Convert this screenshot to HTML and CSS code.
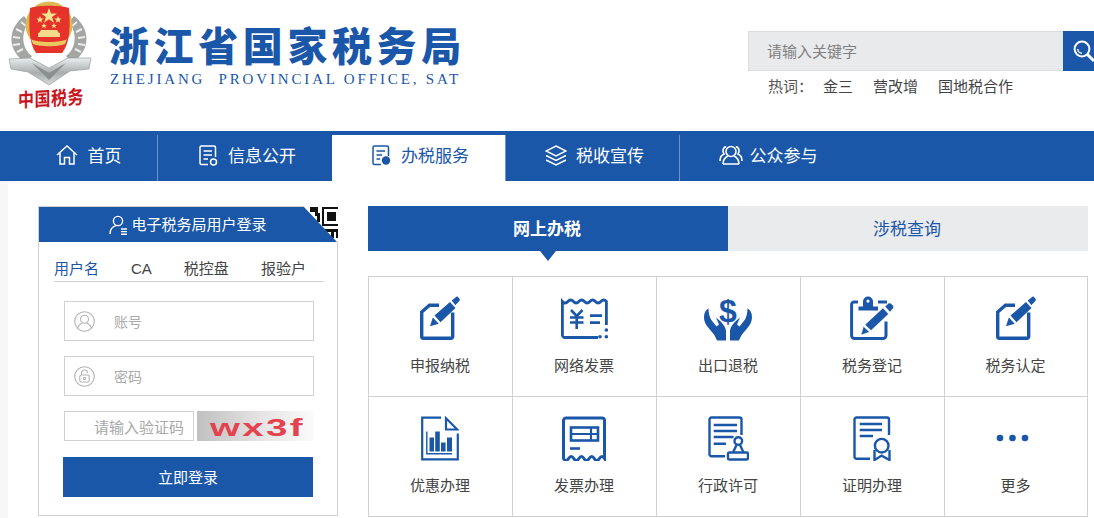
FILE: index.html
```html
<!DOCTYPE html>
<html lang="zh-CN">
<head>
<meta charset="utf-8">
<title>浙江省国家税务局</title>
<link rel="stylesheet" href="styles.css">
</head>
<body>
<div class="page">
  <header class="header">
    <div class="emblem">
      <svg class="emblem-mark" viewBox="0 0 100 86" width="100" height="86">
        <defs>
          <linearGradient id="silver" x1="0" y1="0" x2="0" y2="1">
            <stop offset="0" stop-color="#eceeee"/>
            <stop offset="0.55" stop-color="#a9adad"/>
            <stop offset="1" stop-color="#d9dbdb"/>
          </linearGradient>
        </defs>
        <path d="M24 16 C8 28 6 50 26 63 L32 56 C21 48 21 32 29 22Z" fill="#a3a6a3"/>
        <path d="M74 16 C90 28 92 50 72 63 L66 56 C77 48 77 32 69 22Z" fill="#a3a6a3"/>
        <path d="M21 22 l5 4 M16 29 l6 3 M13 37 l7 1 M13 45 l7 -1 M17 52 l6 -3 M77 22 l-5 4 M82 29 l-6 3 M85 37 l-7 1 M85 45 l-7 -1 M81 52 l-6 -3" stroke="#ececec" stroke-width="2"/>
        <path d="M9 59 L30 58 L49 68 L68 58 L91 58 L89 69 L70 71 L49 85 L28 72 L11 69Z" fill="url(#silver)" stroke="#9a9d9d" stroke-width="0.7"/>
        <path d="M32 63 L49 73 L66 63 L49 80Z" fill="#8b8f8f"/>
        <circle cx="49" cy="25" r="23.5" fill="#dcb84e"/>
        <path d="M30 8 C38 5 60 5 69 8 C70 22 71 42 62 53 L36 53 C28 42 29 22 30 8Z" fill="#e5322a"/>
        <path d="M49 8 l2 5.6 h5.8 l-4.7 3.5 1.8 5.6 -4.9 -3.4 -4.9 3.4 1.8 -5.6 -4.7 -3.5 h5.8Z" fill="#f8e38a"/>
        <path d="M40 16 l1 2.6 h2.6 l-2.1 1.6 .8 2.6 -2.3 -1.6 -2.3 1.6 .8 -2.6 -2.1 -1.6 h2.6Z M58 16 l1 2.6 h2.6 l-2.1 1.6 .8 2.6 -2.3 -1.6 -2.3 1.6 .8 -2.6 -2.1 -1.6 h2.6Z M44 23 l.8 2 h2 l-1.6 1.2 .6 2 -1.8 -1.2 -1.8 1.2 .6 -2 -1.6 -1.2 h2Z M54 23 l.8 2 h2 l-1.6 1.2 .6 2 -1.8 -1.2 -1.8 1.2 .6 -2 -1.6 -1.2 h2Z" fill="#f8e38a"/>
        <path d="M41 30 h16 l2 3 h-20Z M38 33 h22 v4 h-22Z" fill="#f2d98b"/>
        <path d="M31 39 C36 43 62 43 67 39 L65 44 C58 47 40 47 33 44Z" fill="#e8c961"/>
      </svg>
      <span class="emblem-text">中国税务</span>
    </div>
    <div class="brand">
      <div class="brand-name">浙江省国家税务局</div>
      <div class="brand-en">ZHEJIANG  PROVINCIAL OFFICE, SAT</div>
    </div>
    <div class="search">
      <div class="search-bar">
        <span class="search-field">请输入关键字</span>
        <span class="search-btn">
          <svg viewBox="0 0 24 24" width="24" height="24" fill="none" stroke="#fff">
            <circle cx="10" cy="10" r="7.4" stroke-width="2"/>
            <path d="M5.8 10 a4.2 4.2 0 0 0 4.2 4.2" stroke-width="1.4"/>
            <path d="M15.6 15.6 L22 22" stroke-width="3"/>
          </svg>
        </span>
      </div>
      <div class="hot">
        <span class="hot-label">热词：</span>
        <a class="hot-item">金三</a>
        <a class="hot-item">营改增</a>
        <a class="hot-item">国地税合作</a>
      </div>
    </div>
  </header>

  <nav class="nav">
    <a class="nav-item nav-home">
      <svg class="nav-icon" viewBox="0 0 22 20" width="22" height="20" fill="none" stroke="currentColor" stroke-width="1.5">
        <path d="M1 10 L11 1 L21 10"/>
        <path d="M4 8 V19 H8.5 V12.5 H13.5 V19 H18 V8"/>
      </svg>
      <span>首页</span>
    </a>
    <a class="nav-item nav-info">
      <svg class="nav-icon" viewBox="0 0 19 21" width="19" height="21" fill="none" stroke="currentColor" stroke-width="1.5">
        <path d="M9 19.5 H2.5 a1.5 1.5 0 0 1 -1.5 -1.5 V2.5 A1.5 1.5 0 0 1 2.5 1 H15 a1.5 1.5 0 0 1 1.5 1.5 V12"/>
        <path d="M4.5 6 H13 M4.5 10 H13 M4.5 14 H9"/>
        <circle cx="14.5" cy="17" r="3"/>
      </svg>
      <span>信息公开</span>
    </a>
    <a class="nav-item nav-active">
      <svg class="nav-icon" viewBox="0 0 19 21" width="19" height="21" fill="none" stroke="currentColor" stroke-width="1.5">
        <path d="M9 19.5 H2.5 a1.5 1.5 0 0 1 -1.5 -1.5 V2.5 A1.5 1.5 0 0 1 2.5 1 H15 a1.5 1.5 0 0 1 1.5 1.5 V11"/>
        <path d="M4.5 6 H13 M4.5 10 H10 M4.5 14 H8"/>
        <circle cx="14" cy="15.5" r="4.2" fill="currentColor" stroke="none"/>
      </svg>
      <span>办税服务</span>
    </a>
    <a class="nav-item nav-news">
      <svg class="nav-icon" viewBox="0 0 22 21" width="22" height="21" fill="none" stroke="currentColor" stroke-width="1.5">
        <path d="M11 1 L21 6 L11 11 L1 6Z"/>
        <path d="M1 10.5 L11 15.5 L21 10.5"/>
        <path d="M1 15 L11 20 L21 15"/>
      </svg>
      <span>税收宣传</span>
    </a>
    <a class="nav-item nav-last">
      <svg class="nav-icon" viewBox="0 0 24 20" width="24" height="20" fill="none" stroke="currentColor" stroke-width="1.6">
        <circle cx="12" cy="6.5" r="5"/>
        <path d="M4 19 C4 14 7 12 9 11 M20 19 C20 14 17 12 15 11 M4 19 H20"/>
        <path d="M7.2 1.6 C4 2 3 6 5 9 C2.5 10 1 13 1 16 M16.8 1.6 C20 2 21 6 19 9 C21.5 10 23 13 23 16"/>
      </svg>
      <span>公众参与</span>
    </a>
  </nav>

  <main class="main">
    <section class="login">
      <svg class="login-qr" viewBox="0 0 36 36" width="36" height="36">
        <path d="M2 0 H36 V36Z" fill="#fff"/>
        <path d="M8 1 h5 v5 h-5Z M13 1 h3 v9 h-3Z M15 7 h3 v9 h-3Z M20 1 h16 v2 h-16Z M20 1 h2 v19 h-2Z M20 18 h16 v2 h-16Z M25 6 h9 v9 h-9Z M23 23 h13 v3 h-13Z M29 26 h3 v6 h-3Z M34 26 h2 v6 h-2Z" fill="#111"/>
      </svg>
      <h2 class="login-head">
        <svg viewBox="0 0 19 20" width="19" height="20" fill="none" stroke="#fff" stroke-width="1.4">
          <circle cx="9" cy="6" r="4.6"/>
          <path d="M1 19 C1 14 4 11.5 7 10.6 M12 14 H18 M12 16.6 H18 M12 19.2 H18"/>
        </svg>
        <span class="login-title">电子税务局用户登录</span>
      </h2>
      <div class="login-tabs">
        <a class="login-tab login-tab-on">用户名</a>
        <a class="login-tab">CA</a>
        <a class="login-tab">税控盘</a>
        <a class="login-tab">报验户</a>
      </div>
      <div class="login-form">
        <div class="field">
          <svg viewBox="0 0 21 21" width="21" height="21" fill="none" stroke="#b4b4b4" stroke-width="1.1">
            <circle cx="10.5" cy="10.5" r="9.8"/>
            <circle cx="10.5" cy="8.2" r="4"/>
            <path d="M3.6 17 C4.5 14 6 13 8 12 M17.4 17 C16.5 14 15 13 13 12"/>
          </svg>
          <span class="field-hint">账号</span>
        </div>
        <div class="field">
          <svg viewBox="0 0 21 21" width="21" height="21" fill="none" stroke="#b4b4b4" stroke-width="1.1">
            <circle cx="10.5" cy="10.5" r="9.8"/>
            <rect x="5.8" y="9" width="9.4" height="7" rx="1.5"/>
            <path d="M7.5 9 V7 a3 3 0 0 1 6 0"/>
            <circle cx="10.5" cy="12.5" r="1.1"/>
          </svg>
          <span class="field-hint">密码</span>
        </div>
        <div class="captcha-row">
          <div class="captcha-field">请输入验证码</div>
          <div class="captcha-code"><span class="captcha-chars">wx3f</span></div>
        </div>
        <button class="login-btn" type="button">立即登录</button>
      </div>
    </section>

    <section class="service">
      <div class="service-tabs">
        <a class="service-tab service-tab-on">网上办税</a>
        <a class="service-tab">涉税查询</a>
      </div>
      <div class="service-grid">
        <a class="tile">
          <svg class="tile-icon" viewBox="0 0 40 44" width="40" height="44">
            <g id="edit-doc">
              <path d="M19 8.7 H9.5 L1.7 15.5 V40 a1.7 1.7 0 0 0 1.7 1.7 H31 a1.7 1.7 0 0 0 1.7 -1.7 V16" fill="none" stroke="#1a57a8" stroke-width="3.4"/>
              <path d="M10 29.8 L12.8 21 L18.8 27.2Z M14.5 19 L30 5.5 L35.5 11.5 L20.5 25.8Z M31.8 4 L36.3 0.3 Q37.5 -0.3 38.5 1 L39.6 2.6 Q40.2 3.8 39 4.8 L35.4 8.8Z" fill="#1a57a8"/>
            </g>
          </svg>
          <span class="tile-name">申报纳税</span>
        </a>
        <a class="tile">
          <svg class="tile-icon" viewBox="0 0 47 41" width="47" height="41" fill="none" stroke="#1a57a8" stroke-width="2.8">
            <path d="M37 39.5 H4 a2.6 2.6 0 0 1 -2.6 -2.6 V3.5 q2.75 3 5.5 0 t5.5 0 t5.5 0 t5.5 0 t5.5 0 t5.5 0 t5.5 0 t5.5 0 V27"/>
            <path d="M10 12 L15.7 18 L21.5 12 M9 19.5 H22.5 M9 24.5 H22.5 M15.7 18 V31" stroke-width="2.6"/>
            <path d="M29 17.7 H41 M29 24.7 H39"/>
            <circle cx="45.3" cy="32" r="1.8" fill="#1a57a8" stroke="none"/>
            <circle cx="45.3" cy="38.7" r="1.8" fill="#1a57a8" stroke="none"/>
            <circle cx="39" cy="38.7" r="1.8" fill="#1a57a8" stroke="none"/>
          </svg>
          <span class="tile-name">网络发票</span>
        </a>
        <a class="tile">
          <svg class="tile-icon tile-icon-open" viewBox="0 0 48 44" width="48" height="44" fill="#1a57a8">
            <text x="24" y="25" text-anchor="middle" class="dollar">$</text>
            <path d="M4.5 12 C-1 15 -1 23 2 28 C5 33 10 36 13 44 H22 V35 C22 30 18 26 12 21 L15 28 L12.5 30 L7 23 C5 19 4.5 15 4.5 12Z"/>
            <path d="M43.5 12 C49 15 49 23 46 28 C43 33 38 36 35 44 H26 V35 C26 30 30 26 36 21 L33 28 L35.5 30 L41 23 C43 19 43.5 15 43.5 12Z"/>
          </svg>
          <span class="tile-name">出口退税</span>
        </a>
        <a class="tile">
          <svg class="tile-icon" viewBox="0 0 44 44" width="44" height="44">
            <path d="M8 5.6 H4 a2.4 2.4 0 0 0 -2.4 2.4 V39 a3 3 0 0 0 3 3 H33 a3 3 0 0 0 3 -3 V25 M28 5.6 H37" fill="none" stroke="#1a57a8" stroke-width="3"/>
            <path d="M8.5 14 V10 H13 V5 A5 5 0 0 1 23 5 V10 H28 V14Z" fill="#1a57a8"/>
            <circle cx="18" cy="4.6" r="1.6" fill="#fff"/>
            <path d="M11 38.5 L13.5 30 L19.5 35.5Z M15 28.2 L33 11.5 L38.5 17.5 L21 34Z M35 10 L38.5 6.8 Q40 6 41 7 L43 9 Q44.2 10.5 43 12 L40 15.5Z" fill="#1a57a8" stroke="#fff" stroke-width="0.4"/>
          </svg>
          <span class="tile-name">税务登记</span>
        </a>
        <a class="tile">
          <svg class="tile-icon" viewBox="0 0 40 44" width="40" height="44"><use href="#edit-doc"/></svg>
          <span class="tile-name">税务认定</span>
        </a>
        <a class="tile">
          <svg class="tile-icon" viewBox="0 0 38 44" width="38" height="44">
            <path d="M20 1.2 H1.2 V42.8 H36.8 V17" fill="none" stroke="#1a57a8" stroke-width="2.2"/>
            <path d="M25 1.8 L36.3 13 H25Z" fill="none" stroke="#1a57a8" stroke-width="2.2"/>
            <path d="M5.8 15 V37.3 H31" fill="none" stroke="#1a57a8" stroke-width="1.4"/>
            <path d="M8.5 21 H13 V35 H8.5Z M14.2 15 H18.8 V35 H14.2Z M20 26 H24.6 V35 H20Z M26 21 H31 V35 H26Z" fill="#1a57a8"/>
          </svg>
          <span class="tile-name">优惠办理</span>
        </a>
        <a class="tile">
          <svg class="tile-icon" viewBox="0 0 44 44" width="44" height="44" fill="none" stroke="#1a57a8">
            <path d="M1.5 42 V4 a2.5 2.5 0 0 1 2.5 -2.5 H40 a2.5 2.5 0 0 1 2.5 2.5 V42 q-2.56 -4 -5.125 0 t-5.125 0 t-5.125 0 t-5.125 0 t-5.125 0 t-5.125 0 t-5.125 0 t-5.125 0Z" stroke-width="3"/>
            <rect x="9" y="11" width="27" height="13" stroke-width="2.6"/>
            <path d="M9 17.5 H36 M29 11 V24" stroke-width="2.2"/>
            <path d="M8 32 H18" stroke-width="2.6"/>
          </svg>
          <span class="tile-name">发票办理</span>
        </a>
        <a class="tile">
          <svg class="tile-icon" viewBox="0 0 41 45" width="41" height="45" fill="none" stroke="#1a57a8" stroke-width="2.4">
            <path d="M17 40.3 H3.5 a2 2 0 0 1 -2 -2 V3.5 a2 2 0 0 1 2 -2 H31.5 a2 2 0 0 1 2 2 V19"/>
            <path d="M5.7 9 H29 M5.7 15 H29 M5.7 21 H25.5 M5.7 27.7 H18"/>
            <circle cx="30.3" cy="25" r="3.8"/>
            <path d="M28.5 29 L25 36.5 M32 29 L35.5 36.5"/>
            <rect x="20" y="36.5" width="20" height="7" rx="1.5"/>
          </svg>
          <span class="tile-name">行政许可</span>
        </a>
        <a class="tile">
          <svg class="tile-icon" viewBox="0 0 38 45" width="38" height="45" fill="none" stroke="#1a57a8" stroke-width="2.4">
            <path d="M17 42.7 H3.5 a2 2 0 0 1 -2 -2 V3.5 a2 2 0 0 1 2 -2 H34 a2 2 0 0 1 2 2 V19"/>
            <path d="M6.7 8 H29 M6.7 14 H29 M6.7 20 H20"/>
            <circle cx="28.7" cy="29.7" r="6.8"/>
            <path d="M21.5 34 V44 L28.7 39.6 L36.5 44 V34"/>
          </svg>
          <span class="tile-name">证明办理</span>
        </a>
        <a class="tile">
          <svg class="tile-icon" viewBox="0 0 45 45" width="45" height="45" fill="#1a57a8">
            <circle cx="7" cy="22" r="3.3"/>
            <circle cx="19.5" cy="22" r="3.3"/>
            <circle cx="32" cy="22" r="3.3"/>
          </svg>
          <span class="tile-name">更多</span>
        </a>
      </div>
    </section>
  </main>
</div>
</body>
</html>
```

FILE: styles.css
```css
html {
  overflow: hidden;
}

body {
  margin: 0;
  background: #fff;
  color: #444;
  font-family: "Noto Sans CJK SC", "Liberation Sans", sans-serif;
  font-size: 15px;
}

a {
  color: inherit;
  text-decoration: none;
}

.page {
  width: 1105px;
  height: 518px;
  overflow: hidden;
}

/* Top band: emblem, site name, search */
.header {
  display: flex;
  height: 131px;
}

.emblem {
  display: flex;
  flex-direction: column;
  align-items: center;
  width: 100px;
  height: 115px;
  flex: none;
}

.emblem-mark {
  display: block;
}

.emblem-text {
  width: 66px;
  margin-left: 2px;
  color: #c8141c;
  font-size: 16px;
  font-weight: 700;
  line-height: 22px;
  letter-spacing: 0.5px;
  white-space: nowrap;
  transform: skewY(-3deg) scaleY(1.2);
}

.brand {
  flex: none;
  margin-left: 9px;
  padding-top: 21px;
  color: #1a57a8;
}

.brand-name {
  font-size: 40px;
  font-weight: 900;
  line-height: 46px;
  letter-spacing: 4.6px;
  white-space: nowrap;
}

.brand-en {
  margin-top: 3px;
  margin-left: 1px;
  font-family: "Liberation Serif", serif;
  font-size: 15px;
  line-height: 18px;
  letter-spacing: 2.85px;
  white-space: pre;
}

.search {
  margin-left: auto;
  padding-top: 31px;
  width: 357px;
  flex: none;
}

.search-bar {
  display: flex;
  height: 40px;
}

.search-field {
  flex: 1;
  padding-left: 18px;
  border: 1px solid #dcdddf;
  border-right: 0;
  background: #e9eaec;
  color: #808080;
  font-size: 15px;
  line-height: 38px;
}

.search-btn {
  display: flex;
  align-items: center;
  justify-content: center;
  width: 42px;
  flex: none;
  background: #1a57a8;
}

.hot {
  display: flex;
  gap: 20px;
  padding: 4px 0 0 20px;
  color: #444;
  line-height: 21px;
}

.hot-label {
  margin-right: -10px;
  color: #555;
}

/* Main navigation */
.nav {
  display: flex;
  height: 50px;
  padding-top: 4px;
  box-sizing: border-box;
  background: #1a57a8;
  color: #fff;
}

.nav-item {
  display: flex;
  align-items: center;
  justify-content: center;
  gap: 10px;
  width: 174px;
  padding: 0 0 6px 4px;
  box-sizing: border-box;
  border-right: 1px solid #6d95c9;
  font-size: 17px;
  line-height: 24px;
}

.nav-icon {
  flex: none;
}

.nav-home {
  width: 158px;
  padding-left: 20px;
}

.nav-info {
  padding-left: 6px;
  border-right-color: transparent;
}

.nav-active {
  background: #fff;
  color: #1a57a8;
}

.nav-news {
  gap: 9px;
}

.nav-last {
  border-right: 0;
  padding-left: 2px;
  gap: 7px;
}

/* Content columns */
.main {
  display: flex;
  gap: 30px;
  height: 337px;
  padding: 25px 0 0 30px;
  box-sizing: border-box;
  border-left: 8px solid #f7f7f7;
}

.login {
  position: relative;
  width: 300px;
  height: 310px;
  box-sizing: border-box;
  border: 1px solid #d2d2d2;
  background: #fff;
}

.login-qr {
  position: absolute;
  top: -1px;
  right: -1px;
}

.login-head {
  position: relative;
  display: flex;
  align-items: center;
  justify-content: center;
  gap: 3px;
  height: 35px;
  margin: 0;
  background: #1a57a8;
  color: #fff;
  font-size: 15px;
  font-weight: 400;
  line-height: 21px;
  clip-path: polygon(0 0, 265px 0, 100% 100%, 0 100%);
}

.login-title {
  margin-top: -2px;
}

.login-tabs {
  display: flex;
  gap: 32px;
  height: 40px;
  margin: 0 13px 0 15px;
  box-sizing: border-box;
  padding-top: 16px;
  border-bottom: 1px solid #d2d2d2;
  line-height: 21px;
}

.login-tab {
  font-family: "Liberation Sans", "Noto Sans CJK SC", sans-serif;
}

.login-tab-on {
  color: #1a57a8;
}

.login-form {
  padding: 19px 23px 0 24px;
}

.field {
  display: flex;
  align-items: center;
  gap: 19px;
  height: 40px;
  margin: 0 0 15px 1px;
  padding-left: 9px;
  box-sizing: border-box;
  border: 1px solid #d2d2d2;
}

.field-hint {
  color: #aaa;
  font-size: 14px;
}

.captcha-row {
  display: flex;
  gap: 3px;
  height: 30px;
  margin-left: 1px;
}

.captcha-field {
  width: 130px;
  padding-left: 29px;
  box-sizing: border-box;
  border: 1px solid #d2d2d2;
  color: #a8a8a8;
  font-size: 15px;
  line-height: 29px;
  white-space: nowrap;
}

.captcha-code {
  width: 117px;
  padding-left: 13px;
  box-sizing: border-box;
  overflow: hidden;
  background: linear-gradient(90deg, #c0c0c0, #e6e4e4 55%, #fbfbfb);
  color: #e2434f;
  font-family: "Liberation Sans", sans-serif;
  font-size: 24px;
  font-weight: 700;
  line-height: 33px;
}

/* The code drawn wide, as the verification service renders it */
.captcha-chars {
  display: inline-block;
  letter-spacing: 1.5px;
  transform: scaleX(1.6);
  transform-origin: left center;
}

.login-btn {
  display: block;
  width: 250px;
  height: 40px;
  margin-top: 16px;
  padding: 0 0 2px;
  border: 0;
  background: #1a57a8;
  color: #fff;
  font: inherit;
  font-size: 15px;
}

.service {
  width: 720px;
  flex: none;
}

.service-tabs {
  display: flex;
  height: 45px;
}

.service-tab {
  position: relative;
  flex: 1;
  padding-right: 2px;
  background: #eaebed;
  color: #1a57a8;
  font-size: 17px;
  line-height: 44px;
  text-align: center;
}

.service-tab-on {
  background: #1a57a8;
  color: #fff;
  font-weight: 700;
}

.service-tab-on::after {
  content: "";
  position: absolute;
  left: 50%;
  top: 100%;
  margin-left: -8px;
  border: solid transparent;
  border-width: 10px 8px 0;
  border-top-color: #1a57a8;
}

.service-grid {
  display: grid;
  grid-template-columns: repeat(4, 144px) 143px;
  grid-auto-rows: 120px;
  margin-top: 25px;
  border-top: 1px solid #d2d2d2;
  border-left: 1px solid #d2d2d2;
}

.tile {
  display: flex;
  flex-direction: column;
  align-items: center;
  padding: 19px 1px 0 0;
  box-sizing: border-box;
  border-right: 1px solid #d2d2d2;
  border-bottom: 1px solid #d2d2d2;
}

.tile-icon {
  display: block;
  flex: none;
  height: 45px;
}

.tile-icon-open {
  overflow: visible;
}

.tile-name {
  margin-top: 13px;
  color: #444;
  font-size: 15px;
  line-height: 21px;
}

.dollar {
  font-family: "Liberation Sans", sans-serif;
  font-size: 32px;
  font-weight: 700;
}
```
